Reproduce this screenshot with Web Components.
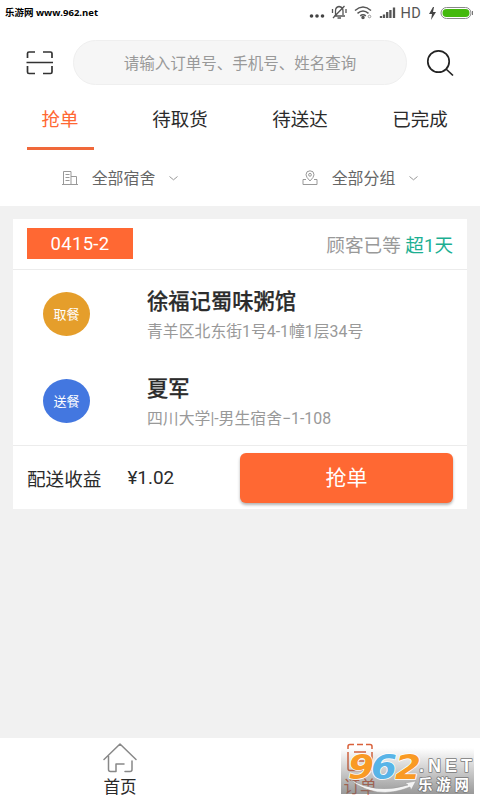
<!DOCTYPE html>
<html lang="zh-CN">
<head>
<meta charset="utf-8">
<title>抢单</title>
<style>
  body {
    margin: 0;
    background: #f1f1f1;
    font-family: Roboto, "Noto Sans CJK SC", sans-serif;
    color: #2b2b2b;
  }
</style>
</head>
<body>
<rider-app></rider-app>

<script>
const ICONS = {
  scan: `<svg width="28" height="26" viewBox="0 0 28 26" fill="none" stroke="#333" stroke-width="1.7"><path d="M1.500 8V3.500Q1.500 2 3 2H9M17 2h7.500Q26 2 26 3.500V8M1.500 16v6Q1.500 23.500 3 23.500H9M17 23.500h7.500Q26 23.500 26 22V16M.5 12.500h26.500"/></svg>`,
  search: `<svg width="28" height="28" viewBox="0 0 28 28" fill="none" stroke="#222" stroke-width="1.7"><circle cx="12.500" cy="12.500" r="10.700"/><path d="M20 20l7 6.500"/></svg>`,
  building: `<svg width="16" height="16" viewBox="0 0 16 16" fill="none" stroke="#999" stroke-width="1"><path d="M0 14.500h16M1.500 14.500v-13h7.500v13M9 6.500h5.500v8M3.500 4.500h4M3.500 7.500h4M3.500 10.500h4"/></svg>`,
  pin: `<svg width="16" height="16" viewBox="0 0 16 16" fill="none" stroke="#999" stroke-width="1"><path d="M4 9.500H1v5h14v-5h-3M8 11Q4 7 4 4.800a4 4 0 0 1 8 0Q12 7 8 11z"/><circle cx="8" cy="4.800" r="1.400"/></svg>`,
  chevron: `<svg width="9" height="5" viewBox="0 0 9 5" fill="none" stroke="#999" stroke-width="1"><path d="M.5.5l4 3.300 4-3.300"/></svg>`,
  home: `<svg width="34" height="30" viewBox="0 0 34 30" fill="none" stroke="#888" stroke-width="1.500" stroke-linecap="round" stroke-linejoin="round"><path d="M1 16.500L17 1l16 15.500M5.500 13v13.500q0 2 2 2h5.500v-7.500h8M29 18v8.500q0 2-2 2h-5"/></svg>`,
  order: `<svg width="28" height="30" viewBox="0 0 28 30" fill="none" stroke="#d9613b" stroke-width="1.500"><path d="M2 6V3.500Q2 1.500 4 1.500h4M11 1.500h6M20 1.500h4q2 0 2 2V6M2 9v16.500q0 2 2 2h20q2 0 2-2V9M8 9h12M8 18h12"/></svg>`
};

class StatusBar extends HTMLElement {
  connectedCallback() {
    this.attachShadow({ mode: "open" });
    this.shadowRoot.innerHTML = `
      <style>
        :host {
          display: flex;
          align-items: center;
          height: 26px;
          padding: 0 6px 0 5px;
        }

        .site {
          color: #000;
          font: bold 9.500px/26px "Open Sans", "Noto Sans CJK SC", sans-serif;
          flex: 1;
        }

        .hd {
          color: #555;
          font-size: 14.500px;
          letter-spacing: .3px;
          margin: 0 7px 0 4px;
        }

        svg {
          display: block;
        }
      </style>
      <span class="site">乐游网 www.962.net</span>
      <svg width="88" height="20" viewBox="309 3 88 20" fill="none" stroke="#555" stroke-width="1.500">
        <g fill="#444" stroke="none"><circle cx="311.500" cy="16" r="1.800"/><circle cx="317" cy="16" r="1.800"/><circle cx="322.500" cy="16" r="1.800"/></g>
        <path stroke-width="1.300" d="M334 16h11M335.500 15V11q0-4 3.500-4.500 4 .5 4 4.500v4M337.500 18h3.500M333 18L344.500 6M332.500 9v4M346 9v4"/>
        <path d="M355 10.500q8-7 16 0M357.500 13.300q5.500-4.600 11 0M360.200 15.800q2.800-2.200 5.600 0"/>
        <circle cx="363" cy="17.500" r="1" fill="#555"/><circle cx="369.500" cy="16.500" r="1.300" stroke="#999" stroke-width="1"/>
        <path stroke-width="2.300" d="M381 18v-2M384 18v-3.500M387.200 18v-6M390.400 18v-8M394 18V7.500"/>
      </svg>
      <span class="hd">HD</span>
      <svg width="46" height="16" viewBox="0 0 46 16">
        <path d="M5 2L1 9h3l-1 6 5-8H5l1-5z" fill="#444"/>
        <rect x="13" y="2.500" width="30" height="11" rx="5.500" fill="#fff" stroke="#888"/>
        <rect x="14.500" y="4" width="27" height="8" rx="4" fill="#43b90c"/>
        <path d="M44.500 6v4" stroke="#777"/>
      </svg>
    `;
  }
}

class SearchBar extends HTMLElement {
  connectedCallback() {
    this.attachShadow({ mode: "open" });
    this.shadowRoot.innerHTML = `
      <style>
        :host {
          display: flex;
          align-items: center;
          height: 45px;
          margin-top: 14px;
          padding: 0 26px;
        }

        .field {
          flex: 1;
          box-sizing: border-box;
          height: 45px;
          margin: 0 19px;
          border: 1px solid #efefef;
          border-radius: 23px;
          background: #f6f6f6;
          color: #999;
          font-size: 15.500px;
          line-height: 46px;
          text-align: center;
          white-space: nowrap;
        }

        svg {
          display: block;
        }
      </style>
      ${ICONS.scan}
      <div class="field"><slot></slot></div>
      ${ICONS.search}
    `;
  }
}

class TabItem extends HTMLElement {
  connectedCallback() {
    this.attachShadow({ mode: "open" });
    this.shadowRoot.innerHTML = `
      <style>
        :host {
          display: flex;
          flex: 1;
          justify-content: center;
          font-size: 18.500px;
          line-height: 27px;
        }

        span {
          box-sizing: border-box;
          width: 67px;
          height: 43px;
          display: flex;
          justify-content: center;
          white-space: nowrap;
        }

        :host([active]) {
          color: #ff6833;
        }

        :host([active]) span {
          border-bottom: 3px solid #f0683a;
        }
      </style>
      <span><slot></slot></span>
    `;
  }
}

class FilterItem extends HTMLElement {
  connectedCallback() {
    this.attachShadow({ mode: "open" });
    this.shadowRoot.innerHTML = `
      <style>
        :host {
          display: flex;
          flex: 1;
          align-items: center;
          justify-content: center;
          color: #666;
          font-size: 15.900px;
          line-height: 24px;
        }

        .label {
          margin: 0 14px;
          padding-top: 2px;
        }

        svg {
          display: block;
        }
      </style>
      ${ICONS[this.getAttribute("icon")]}
      <span class="label"><slot></slot></span>
      ${ICONS.chevron}
    `;
  }
}

class OrderStop extends HTMLElement {
  connectedCallback() {
    this.attachShadow({ mode: "open" });
    this.shadowRoot.innerHTML = `
      <style>
        :host {
          display: flex;
          align-items: center;
          height: 87.500px;
          padding-left: 30px;
        }

        .badge {
          width: 47px;
          height: 44px;
          margin-right: 57px;
          border-radius: 50%;
          background: var(--badge);
          color: #fff;
          font-size: 13px;
          line-height: 45px;
          text-align: center;
        }

        .text {
          padding-top: 4px;
        }

        .name {
          font-size: 21.300px;
          font-weight: 500;
          line-height: 30px;
          -webkit-text-stroke: .25px;
        }

        .address {
          margin-top: 2px;
          color: #999;
          font-size: 15.850px;
          line-height: 26px;
          white-space: nowrap;
        }
      </style>
      <div class="badge">${this.getAttribute("badge")}</div>
      <div class="text">
        <div class="name"><slot name="name"></slot></div>
        <div class="address"><slot></slot></div>
      </div>
    `;
  }
}

class OrderCard extends HTMLElement {
  connectedCallback() {
    this.attachShadow({ mode: "open" });
    this.shadowRoot.innerHTML = `
      <style>
        :host {
          display: block;
          margin: 13px 13px 0;
          height: 290px;
          background: #fff;
        }

        header,
        footer {
          display: flex;
          align-items: center;
          justify-content: space-between;
          box-sizing: border-box;
          padding: 0 14px;
        }

        header {
          height: 51px;
          padding-bottom: 2px;
          border-bottom: 1px solid #ececec;
        }

        footer {
          height: 64px;
          border-top: 1px solid #ececec;
          font-size: 18.600px;
        }

        main {
          height: 175px;
        }

        .number {
          width: 106px;
          height: 31px;
          background: #ff6833;
          color: #fff;
          font-size: 18.500px;
          letter-spacing: .3px;
          line-height: 33px;
          text-align: center;
        }

        .wait {
          color: #999;
          font-size: 18.600px;
          white-space: pre;
        }

        .wait b {
          color: #1caf92;
          font-weight: 400;
        }

        .price {
          margin-left: 26px;
          flex: 1;
          font-size: 18.900px;
        }

        button {
          width: 213px;
          height: 50px;
          padding: 0;
          border: 0;
          border-radius: 6px;
          background: #ff6833;
          box-shadow: 0 2px 3px rgba(0, 0, 0, .3);
          color: #fff;
          font: 21px/50px Roboto, "Noto Sans CJK SC", sans-serif;
        }
      </style>
      <header>
        <div class="number">0415-2</div>
        <div class="wait">顾客已等 <b>超1天</b></div>
      </header>
      <main><slot></slot></main>
      <footer>
        <span>配送收益</span>
        <span class="price">¥1.02</span>
        <button>抢单</button>
      </footer>
    `;
  }
}

class NavItem extends HTMLElement {
  connectedCallback() {
    this.attachShadow({ mode: "open" });
    this.shadowRoot.innerHTML = `
      <style>
        :host {
          display: flex;
          flex: 1;
          flex-direction: column;
          align-items: center;
          font-size: 16.600px;
          line-height: 24px;
        }

        :host([active]) {
          color: #d9522d;
        }

        svg {
          display: block;
          margin: 5px 0 3px;
        }
      </style>
      ${ICONS[this.getAttribute("icon")]}
      <slot></slot>
    `;
  }
}

// Site stamp laid over the bottom-right corner.
class SiteStamp extends HTMLElement {
  connectedCallback() {
    this.attachShadow({ mode: "open" });
    this.shadowRoot.innerHTML = `
      <style>
        :host {
          position: absolute;
          right: 6px;
          bottom: 6px;
          width: 133px;
          height: 46px;
          background: linear-gradient(rgba(120, 120, 120, 0), rgba(110, 110, 110, .7));
        }

        svg {
          display: block;
          overflow: visible;
        }

        text {
          paint-order: stroke;
          stroke-linejoin: round;
        }
      </style>
      <svg width="133" height="46" viewBox="0 0 133 46">
        <path d="M8 31Q35 47 67 37l-3-2 11-2-5 9-1-3Q35 53 8 31z" fill="#f4f4f4" stroke="#999" stroke-width=".5"/>
        <g font-family="DejaVu Sans" font-weight="700" font-style="italic" font-size="33" stroke="#fff" stroke-width="1.500">
          <text x="7" y="30.500" fill="#f99a24" textLength="26" lengthAdjust="spacingAndGlyphs">9</text>
          <text x="30" y="30.500" fill="#58b4e7" textLength="26" lengthAdjust="spacingAndGlyphs">6</text>
          <text x="54" y="30.500" fill="#f99a24" textLength="26" lengthAdjust="spacingAndGlyphs">2</text>
        </g>
        <g fill="#fff" stroke="#777" stroke-width="1.500" font-weight="700">
          <text x="78" y="24" font-family="Liberation Sans" font-size="18" textLength="53">.NET</text>
          <text x="77" y="41.500" font-family="Noto Sans CJK SC" font-size="14.500" textLength="51">乐游网</text>
        </g>
      </svg>
    `;
  }
}

class RiderApp extends HTMLElement {
  connectedCallback() {
    this.attachShadow({ mode: "open" });
    this.shadowRoot.innerHTML = `
      <style>
        :host {
          display: flex;
          flex-direction: column;
          position: relative;
          width: 480px;
          height: 800px;
          overflow: hidden;
        }

        .top {
          height: 206px;
          background: #fff;
        }

        .row {
          display: flex;
        }

        .tabs {
          padding-top: 22px;
        }

        .filters {
          padding-top: 15px;
        }

        nav {
          display: flex;
          height: 62px;
          margin-top: auto;
          background: #fff;
        }
      </style>
      <div class="top">
        <status-bar></status-bar>
        <search-bar>请输入订单号、手机号、姓名查询</search-bar>
        <div class="row tabs">
          <tab-item active>抢单</tab-item>
          <tab-item>待取货</tab-item>
          <tab-item>待送达</tab-item>
          <tab-item>已完成</tab-item>
        </div>
        <div class="row filters">
          <filter-item icon="building">全部宿舍</filter-item>
          <filter-item icon="pin">全部分组</filter-item>
        </div>
      </div>
      <order-card>
        <order-stop badge="取餐" style="--badge: #e59e2b">
          <span slot="name">徐福记蜀味粥馆</span>青羊区北东街1号4-1幢1层34号
        </order-stop>
        <order-stop badge="送餐" style="--badge: #4377e0">
          <span slot="name">夏军</span>四川大学|-男生宿舍−1-108
        </order-stop>
      </order-card>
      <nav>
        <nav-item icon="home">首页</nav-item>
        <nav-item icon="order" active>订单</nav-item>
      </nav>
      <site-stamp></site-stamp>
    `;
  }
}

customElements.define("status-bar", StatusBar);
customElements.define("search-bar", SearchBar);
customElements.define("tab-item", TabItem);
customElements.define("filter-item", FilterItem);
customElements.define("order-stop", OrderStop);
customElements.define("order-card", OrderCard);
customElements.define("nav-item", NavItem);
customElements.define("site-stamp", SiteStamp);
customElements.define("rider-app", RiderApp);
</script>
</body>
</html>
